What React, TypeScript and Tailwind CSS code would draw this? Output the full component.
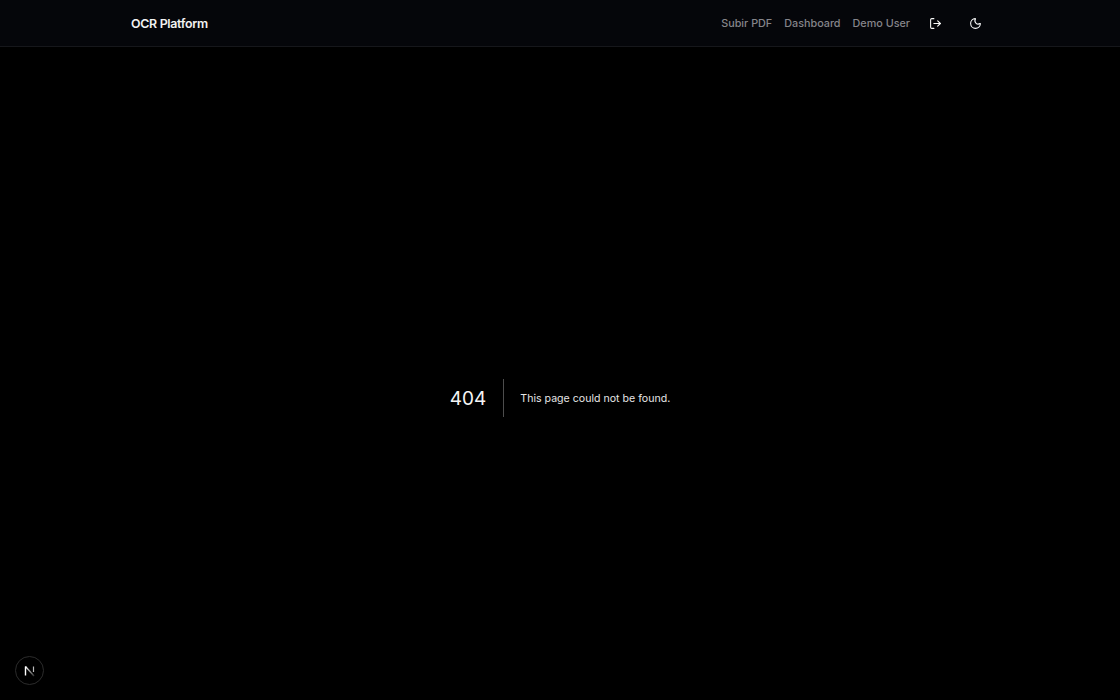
import { LogOut, Moon } from "lucide-react";

const NavLink = ({ label }: { label: string }) => (
  <a href="#" className="text-[#85858a] text-[10.8px] leading-[18px] font-medium pt-px">
    {label}
  </a>
);

export default function App() {
  return (
    <div className="relative h-[700px] overflow-hidden bg-black font-['Inter',sans-serif]">
      <header className="h-[47px] bg-[#05060a] border-b border-[#16171b]">
        <div className="mx-auto w-[858px] h-[46px] flex items-center justify-between">
          <span className="text-[#f2f2f2] text-[12.4px] font-semibold -tracking-[0.3px] pt-[2px]">OCR Platform</span>
          <nav className="flex items-center gap-[12px]">
            <NavLink label="Subir PDF" />
            <NavLink label="Dashboard" />
            <NavLink label="Demo User" />
            <button className="w-[28px] h-[28px] -ml-[1px] flex items-center justify-center text-[#fafafa]">
              <LogOut size={13} />
            </button>
            <button className="w-[28px] h-[28px] flex items-center justify-center text-[#fafafa]">
              <Moon size={13} />
            </button>
          </nav>
        </div>
      </header>

      <main className="h-[700px] flex items-center justify-center text-[#ededed] pt-px">
        <div className="flex items-center">
          <h1 className="text-[19px] font-normal leading-[36px] pt-[2px] pr-[17px] mr-[16px] border-r border-white/30 text-[#f5f5f5]">404</h1>
          <p className="text-[10.6px] leading-[36px] pt-[2px] text-[#e5e5e5]">This page could not be found.</p>
        </div>
      </main>

      {/* next dev indicator */}
      <div className="absolute left-[15px] bottom-[15px] w-[29px] h-[29px] rounded-full bg-black border border-[#2c2c2c] flex items-center justify-center">
        <svg width="12" height="12" viewBox="0 0 12 12" fill="none">
          <path d="M1.5 1.5V10.5" stroke="#fff" strokeWidth="1.4" />
          <path d="M1.5 1.5L10 11" stroke="url(#fade)" strokeWidth="1.4" />
          <path d="M9.5 1.5V7" stroke="#bbb" strokeWidth="1.2" />
          <defs>
            <linearGradient id="fade" x1="1.5" y1="1.5" x2="10" y2="11" gradientUnits="userSpaceOnUse">
              <stop stopColor="#fff" />
              <stop offset="1" stopColor="#fff" stopOpacity="0.2" />
            </linearGradient>
          </defs>
        </svg>
      </div>
    </div>
  );
}
